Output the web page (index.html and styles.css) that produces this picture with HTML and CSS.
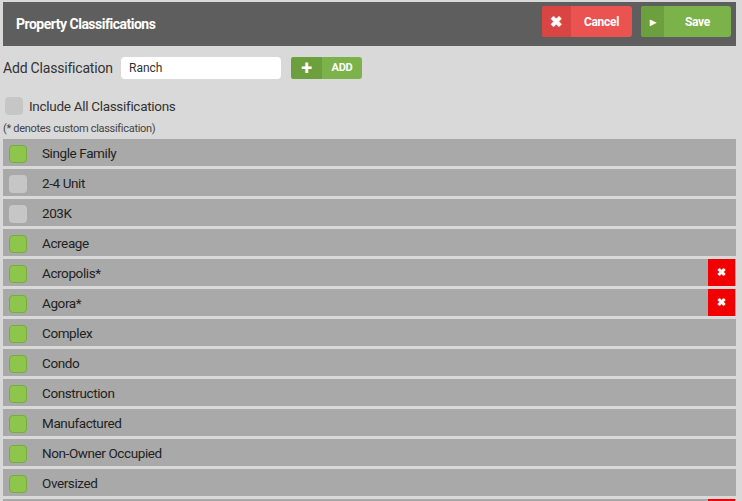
FILE: index.html
```html
<!DOCTYPE html>
<html lang="en">

<head>
    <meta charset="UTF-8">
    <title>Property Classifications</title>
    <link rel="stylesheet" href="styles.css">
</head>

<body>
    <div class="page">
        <div class="header">
            <h2>Property Classifications</h2>
            <div class="header-actions">
                <button class="btn btn-cancel"><span class="btn-icon">&#10006;</span><span class="btn-label">Cancel</span></button>
                <button class="btn btn-save"><span class="btn-icon">&#9656;</span><span class="btn-label">Save</span></button>
            </div>
        </div>

        <div class="add-row">
            <label for="new-class">Add Classification</label>
            <input type="text" id="new-class" value="Ranch">
            <button class="btn btn-add"><span class="btn-icon">+</span><span class="btn-label">ADD</span></button>
        </div>

        <div class="include-row">
            <span class="check"></span>
            <span>Include All Classifications</span>
        </div>
        <p class="note">(* denotes custom classification)</p>

        <ul class="class-list">
            <li><span class="check on"></span>Single Family</li>
            <li><span class="check"></span>2-4 Unit</li>
            <li><span class="check"></span>203K</li>
            <li><span class="check on"></span>Acreage</li>
            <li><span class="check on"></span>Acropolis*<button class="btn-delete">&#10006;</button></li>
            <li><span class="check on"></span>Agora*<button class="btn-delete">&#10006;</button></li>
            <li><span class="check on"></span>Complex</li>
            <li><span class="check on"></span>Condo</li>
            <li><span class="check on"></span>Construction</li>
            <li><span class="check on"></span>Manufactured</li>
            <li><span class="check on"></span>Non-Owner Occupied</li>
            <li><span class="check on"></span>Oversized</li>
            <li><span class="check on"></span>Pacifica*<button class="btn-delete">&#10006;</button></li>
        </ul>
    </div>
</body>

</html>
```

FILE: styles.css
```css
body {
    font-family: Roboto, "Liberation Sans", sans-serif;
    background-color: #d9d9d9;
    margin: 0;
    padding: 0;
    color: #333;
}

.page {
    padding: 2px 6px 0 3px;
}

.header {
    display: flex;
    align-items: flex-start;
    justify-content: space-between;
    background-color: #5e5e5e;
    height: 44px;
    padding: 4px 5px 0 13px;
    box-sizing: border-box;
}

.header h2 {
    margin: 0;
    padding-top: 10px;
    color: #fff;
    font-size: 14px;
    font-weight: bold;
    letter-spacing: -0.5px;
}

.header-actions {
    display: flex;
    gap: 9px;
}

.btn {
    display: flex;
    align-items: stretch;
    border: none;
    border-radius: 3px;
    padding: 0;
    color: #fff;
    font-family: inherit;
    font-weight: bold;
    cursor: pointer;
    overflow: hidden;
}

.btn-cancel,
.btn-save {
    width: 90px;
    height: 31px;
    font-size: 12px;
    letter-spacing: -0.3px;
}

.btn-icon {
    display: flex;
    align-items: center;
    justify-content: center;
}

.btn-label {
    flex: 1;
    display: flex;
    align-items: center;
    justify-content: center;
}

.btn-cancel {
    background-color: #eb5350;
}

.btn-cancel .btn-icon {
    width: 29px;
    background-color: #d94543;
    font-size: 15px;
}

.btn-save {
    background-color: #7cb24a;
}

.btn-save .btn-icon {
    width: 23px;
    background-color: #6c9f3d;
    font-size: 12px;
}

.add-row {
    display: flex;
    align-items: center;
    margin-top: 10px;
    height: 23px;
}

.add-row label {
    font-size: 14px;
    letter-spacing: -0.2px;
    width: 118px;
}

.add-row input {
    width: 160px;
    height: 22px;
    border: none;
    border-radius: 4px;
    padding: 0 8px;
    box-sizing: border-box;
    font-family: inherit;
    font-size: 12px;
    color: #333;
}

.btn-add {
    margin-left: 10px;
    width: 71px;
    height: 22px;
    font-size: 11px;
    letter-spacing: -0.3px;
    background-color: #7cb24a;
}

.btn-add .btn-icon {
    width: 31px;
    background-color: #6c9f3d;
    font-size: 20px;
    line-height: 1;
}

.include-row {
    display: flex;
    align-items: center;
    gap: 6px;
    margin-top: 18px;
    margin-left: 2px;
    font-size: 13.5px;
    letter-spacing: -0.3px;
}

.note {
    margin: 7px 0 4px;
    font-size: 11px;
    letter-spacing: -0.3px;
    color: #444;
}

.check {
    display: inline-block;
    width: 18px;
    height: 18px;
    border-radius: 4px;
    background-color: #c6c6c6;
    box-sizing: border-box;
    flex-shrink: 0;
}

.check.on {
    background-color: #8dc54d;
    border: 1px solid #76ad3c;
}

.class-list {
    list-style: none;
    margin: 0;
    padding: 0;
}

.class-list li {
    display: flex;
    align-items: center;
    height: 27px;
    margin-bottom: 3px;
    padding-left: 6px;
    background-color: #a9a9a9;
    font-size: 13.5px;
    letter-spacing: -0.4px;
    color: #222;
}

.class-list .check {
    margin-right: 15px;
    margin-top: 2px;
}

.btn-delete {
    margin-left: auto;
    margin-right: 1px;
    width: 27px;
    height: 27px;
    border: none;
    background-color: #f00000;
    color: #fff;
    font-size: 11px;
    font-weight: bold;
    padding: 0;
    cursor: pointer;
}
```
